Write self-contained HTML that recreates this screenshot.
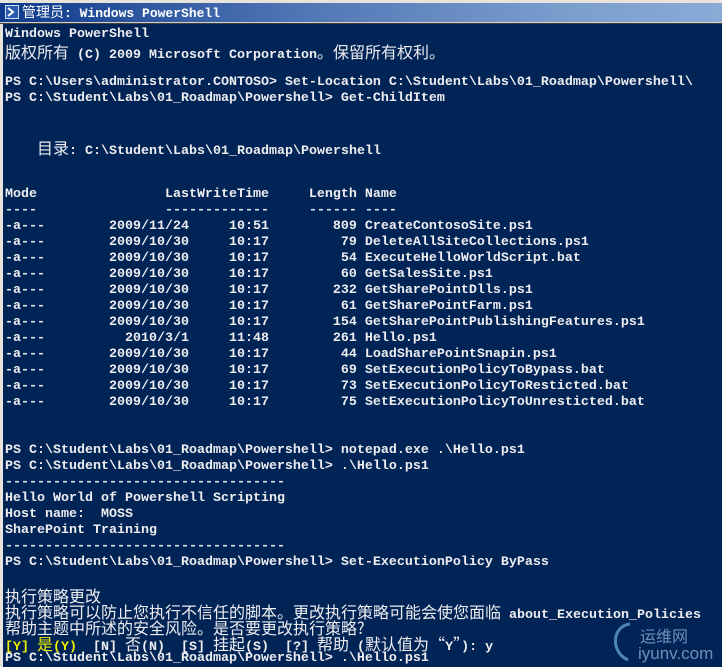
<!DOCTYPE html>
<html><head><meta charset="utf-8"><style>
html,body{margin:0;padding:0;}
body{width:722px;height:667px;overflow:hidden;background:#e8e4dc;position:relative;font-family:"Liberation Mono","Noto Sans CJK SC",monospace;}
#title{position:absolute;left:0;top:3px;width:722px;height:19px;background:linear-gradient(to right,#0e3a8c 0%,#4f74b4 40%,#7d9fcf 80%,#8aaad6 100%);}
#title .t{position:absolute;left:22px;top:1px;color:#fff;font-size:13px;font-weight:bold;line-height:17px;white-space:pre;}
#title .t .c{font-family:"Noto Sans CJK SC",sans-serif;font-size:14px;}
#icon{position:absolute;left:5px;top:2px;width:14px;height:14px;background:#2a5bb0;border:1px solid #cfe0f5;box-sizing:border-box;}
#bd1{position:absolute;left:0;top:22px;width:722px;height:1px;background:#d4d0c8;}
#bd2{position:absolute;left:0;top:23px;width:722px;height:1px;background:#404040;}
#con{position:absolute;left:3px;top:24px;width:719px;height:643px;background:#012456;overflow:hidden;}
#txt{position:absolute;left:2px;top:3px;color:#eeedf0;font-size:13.33px;font-weight:bold;}
.l{height:16px;line-height:16px;white-space:pre;overflow:visible;}
.c{font-family:"Noto Sans CJK SC",sans-serif;font-weight:normal;font-size:16px;line-height:16px;}
.y{color:#f0f000;}
#wm{position:absolute;left:590px;top:612px;width:132px;height:55px;}
</style></head><body>
<div id="title"><div id="icon"><svg width="12" height="12" style="position:absolute;left:0;top:0"><path d="M2 2 L7 6 L2 10" stroke="#fff" stroke-width="2" fill="none"/></svg></div><div class="t"><span class="c">管理员</span>: Windows PowerShell</div></div>
<div id="bd1"></div><div id="bd2"></div>
<div id="con">
<div id="txt">
<div class="l">Windows PowerShell</div>
<div class="l"><span class="c">版权所有</span> (C) 2009 Microsoft Corporation<span class="c">。保留所有权利。</span></div>
<div class="l"> </div>
<div class="l">PS C:\Users\administrator.CONTOSO&gt; Set-Location C:\Student\Labs\01_Roadmap\Powershell\</div>
<div class="l">PS C:\Student\Labs\01_Roadmap\Powershell&gt; Get-ChildItem</div>
<div class="l"> </div>
<div class="l"> </div>
<div class="l">    <span class="c">目录</span>: C:\Student\Labs\01_Roadmap\Powershell</div>
<div class="l"> </div>
<div class="l"> </div>
<div class="l">Mode                LastWriteTime     Length Name</div>
<div class="l">----                -------------     ------ ----</div>
<div class="l">-a---        2009/11/24     10:51        809 CreateContosoSite.ps1</div>
<div class="l">-a---        2009/10/30     10:17         79 DeleteAllSiteCollections.ps1</div>
<div class="l">-a---        2009/10/30     10:17         54 ExecuteHelloWorldScript.bat</div>
<div class="l">-a---        2009/10/30     10:17         60 GetSalesSite.ps1</div>
<div class="l">-a---        2009/10/30     10:17        232 GetSharePointDlls.ps1</div>
<div class="l">-a---        2009/10/30     10:17         61 GetSharePointFarm.ps1</div>
<div class="l">-a---        2009/10/30     10:17        154 GetSharePointPublishingFeatures.ps1</div>
<div class="l">-a---          2010/3/1     11:48        261 Hello.ps1</div>
<div class="l">-a---        2009/10/30     10:17         44 LoadSharePointSnapin.ps1</div>
<div class="l">-a---        2009/10/30     10:17         69 SetExecutionPolicyToBypass.bat</div>
<div class="l">-a---        2009/10/30     10:17         73 SetExecutionPolicyToResticted.bat</div>
<div class="l">-a---        2009/10/30     10:17         75 SetExecutionPolicyToUnresticted.bat</div>
<div class="l"> </div>
<div class="l"> </div>
<div class="l">PS C:\Student\Labs\01_Roadmap\Powershell&gt; notepad.exe .\Hello.ps1</div>
<div class="l">PS C:\Student\Labs\01_Roadmap\Powershell&gt; .\Hello.ps1</div>
<div class="l">-----------------------------------</div>
<div class="l">Hello World of Powershell Scripting</div>
<div class="l">Host name:  MOSS</div>
<div class="l">SharePoint Training</div>
<div class="l">-----------------------------------</div>
<div class="l">PS C:\Student\Labs\01_Roadmap\Powershell&gt; Set-ExecutionPolicy ByPass</div>
<div class="l"> </div>
<div class="l"><span class="c">执行策略更改</span></div>
<div class="l"><span class="c">执行策略可以防止您执行不信任的脚本。更改执行策略可能会使您面临</span> about_Execution_Policies</div>
<div class="l"><span class="c">帮助主题中所述的安全风险。是否要更改执行策略?</span></div>
<div class="l"><span class="y">[Y] <span class="c">是</span>(Y)</span>  [N] <span class="c">否</span>(N)  [S] <span class="c">挂起</span>(S)  [?] <span class="c">帮助</span> (<span class="c">默认值为</span><span class="c">“</span>Y<span class="c">”</span>): y</div>
<div class="l">PS C:\Student\Labs\01_Roadmap\Powershell&gt; .\Hello.ps1</div>
</div>
</div>
<div id="wm">
<svg width="132" height="55" style="position:absolute;left:0;top:0"><path d="M40 12 C22 14 20 40 38 48" stroke="#6fb0e0" stroke-width="3" fill="none" opacity="0.7"/></svg>
<div style="position:absolute;left:50px;top:14px;color:#8fb6d8;font-family:'Noto Sans CJK SC',sans-serif;font-size:16px;line-height:18px;opacity:0.75">运维网</div>
<div style="position:absolute;left:48px;top:32px;color:#8fb6d8;font-family:'Liberation Sans',sans-serif;font-size:17px;line-height:19px;opacity:0.75">iyunv.com</div>
</div>
</body></html>
